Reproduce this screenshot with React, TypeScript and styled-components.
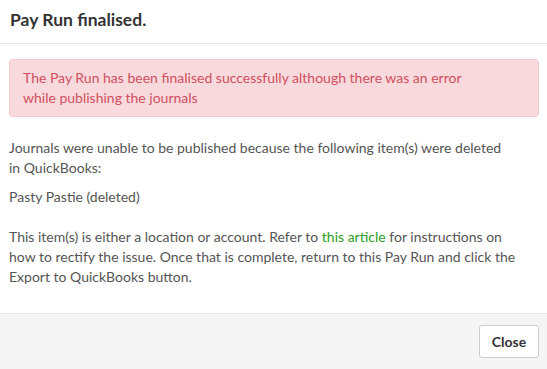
import React from 'react'
import styled, { createGlobalStyle } from 'styled-components'

const GlobalStyle = createGlobalStyle`
  html, body {
    margin: 0;
    padding: 0;
    background: #fff;
  }
  body {
    font-family: Lato, "Open Sans", sans-serif;
    font-size: 14px;
    color: #555;
  }
`

const Modal = styled.div`
  width: 547px;
  height: 369px;
  display: flex;
  flex-direction: column;
  background: #fff;
`

const Header = styled.div`
  height: 44px;
  box-sizing: border-box;
  padding: 9px 10px 0;
  border-bottom: 1px solid #e5e5e5;
`

const Title = styled.h4`
  margin: 0;
  font-size: 17.5px;
  line-height: 22px;
  font-weight: 700;
  color: #333;
`

const Body = styled.div`
  flex: 1;
  padding: 15px 8px 0 9px;
`

const Alert = styled.div`
  padding: 8px 13px;
  border: 1px solid #f5c6cb;
  border-radius: 4px;
  background: #f8d9dc;
  color: #d0505f;
  line-height: 20px;
  margin-bottom: 21px;
`

const Paragraph = styled.p<{ $gap?: number }>`
  max-width: 510px;
  margin: 0 0 ${p => p.$gap ?? 9}px;
  line-height: 20px;
`

const ArticleLink = styled.a`
  color: #2ca01c;
  text-decoration: none;
`

const Footer = styled.div`
  height: 55px;
  padding: 0 8px;
  display: flex;
  align-items: center;
  justify-content: flex-end;
  border-top: 1px solid #e5e5e5;
  background: #f5f5f5;
`

const Button = styled.button`
  width: 60px;
  height: 33px;
  border: 1px solid #ccc;
  border-radius: 3px;
  background: #fff;
  color: #333;
  font-family: inherit;
  font-size: 14px;
  font-weight: 700;
  cursor: pointer;
`

export default function App() {
  return (
    <>
      <GlobalStyle />
      <Modal>
        <Header>
          <Title>Pay Run finalised.</Title>
        </Header>
        <Body>
          <Alert>
            The Pay Run has been finalised successfully although there was an error
            <br />
            while publishing the journals
          </Alert>
          <Paragraph>
            Journals were unable to be published because the following item(s) were deleted
            in&nbsp;QuickBooks:
          </Paragraph>
          <Paragraph $gap={20}>Pasty Pastie (deleted)</Paragraph>
          <Paragraph>
            This item(s) is either a location or account. Refer to{' '}
            <ArticleLink href='#'>this article</ArticleLink> for instructions on how to rectify the
            issue. Once that is complete, return to this Pay Run and click the Export to QuickBooks
            button.
          </Paragraph>
        </Body>
        <Footer>
          <Button>Close</Button>
        </Footer>
      </Modal>
    </>
  )
}
